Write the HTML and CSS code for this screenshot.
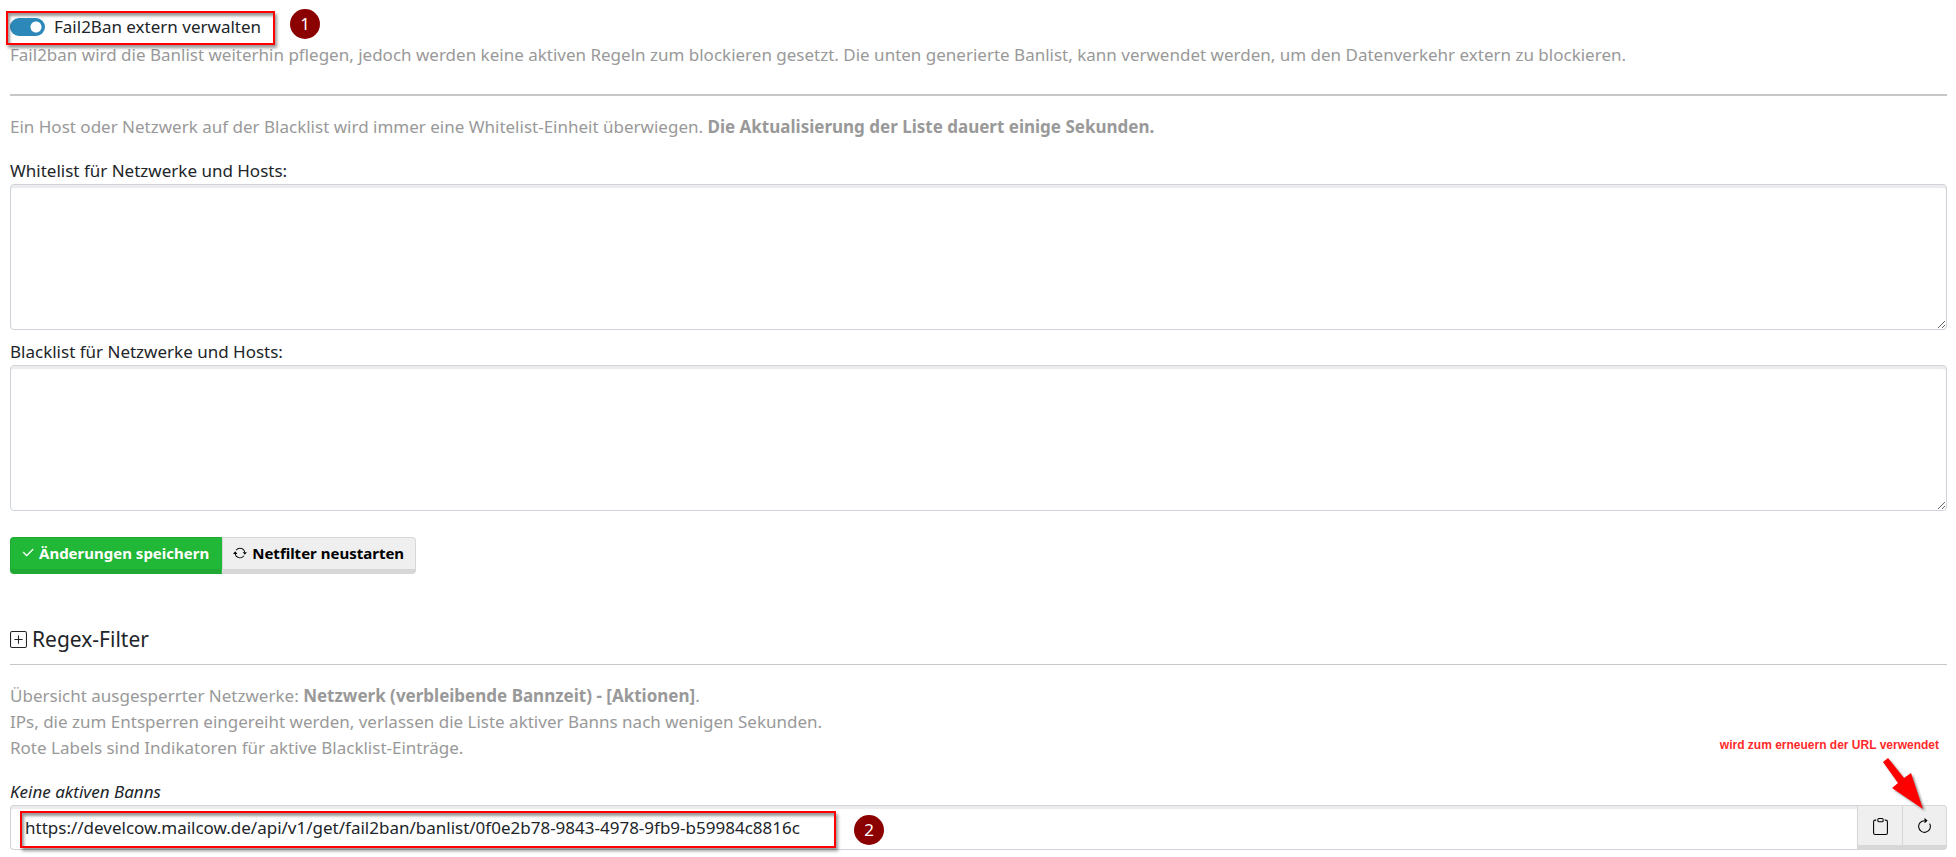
FILE: index.html
```html
<!DOCTYPE html>
<html lang="de">
<head>
<meta charset="utf-8">
<meta name="viewport" content="width=device-width, initial-scale=1">
<title>Fail2Ban</title>
<link rel="stylesheet" href="styles.css">
</head>
<body>
<main class="page">
  <form class="settings">
    <div class="switch-row">
      <input class="switch" type="checkbox" role="switch" id="manage-external" checked>
      <label for="manage-external">Fail2Ban extern verwalten</label>
      <span class="frame frame-switch"></span>
      <span class="badge badge-switch">1</span>
    </div>
    <p class="muted help">Fail2ban wird die Banlist weiterhin pflegen, jedoch werden keine aktiven Regeln zum blockieren gesetzt. Die unten generierte Banlist, kann verwendet werden, um den Datenverkehr extern zu blockieren.</p>
    <hr class="rule rule-thick">
    <p class="muted intro">Ein Host oder Netzwerk auf der Blacklist wird immer eine Whitelist-Einheit überwiegen. <b>Die Aktualisierung der Liste dauert einige Sekunden.</b></p>
    <div class="field">
      <label for="whitelist">Whitelist für Netzwerke und Hosts:</label>
      <textarea class="control area" id="whitelist" rows="5"></textarea>
    </div>
    <div class="field">
      <label for="blacklist">Blacklist für Netzwerke und Hosts:</label>
      <textarea class="control area" id="blacklist" rows="5"></textarea>
    </div>
    <div class="actions">
      <button class="btn btn-save" type="button">
        <svg class="icon" viewBox="0 0 16 16" fill="currentColor" aria-hidden="true"><path d="M13.854 3.646a.5.5 0 0 1 0 .708l-7 7a.5.5 0 0 1-.708 0l-3.5-3.5a.5.5 0 1 1 .708-.708L6.5 10.293l6.646-6.647a.5.5 0 0 1 .708 0z" stroke="currentColor" stroke-width=".8"/></svg>
        Änderungen speichern</button>
      <button class="btn btn-gray btn-restart" type="button">
        <svg class="icon" viewBox="0 0 16 16" fill="currentColor" aria-hidden="true"><path d="M11.534 7h3.932a.25.25 0 0 1 .192.41l-1.966 2.36a.25.25 0 0 1-.384 0l-1.966-2.36a.25.25 0 0 1 .192-.41zm-11 2h3.932a.25.25 0 0 0 .192-.41L2.692 6.23a.25.25 0 0 0-.384 0L.342 8.59A.25.25 0 0 0 .534 9z"/><path d="M8 3c-1.552 0-2.94.707-3.857 1.818a.5.5 0 1 1-.771-.636A6.002 6.002 0 0 1 13.917 7H12.9A5.002 5.002 0 0 0 8 3zM3.1 9a5.002 5.002 0 0 0 8.757 2.182.5.5 0 1 1 .771.636A6.002 6.002 0 0 1 2.083 9H3.1z"/></svg>
        Netfilter neustarten</button>
    </div>
  </form>

  <section class="bans">
    <h2 class="heading">
      <svg class="icon-plus" viewBox="0 0 16 16" fill="currentColor" aria-hidden="true"><path d="M14 1a1 1 0 0 1 1 1v12a1 1 0 0 1-1 1H2a1 1 0 0 1-1-1V2a1 1 0 0 1 1-1h12zM2 0a2 2 0 0 0-2 2v12a2 2 0 0 0 2 2h12a2 2 0 0 0 2-2V2a2 2 0 0 0-2-2H2z"/><path d="M8 4a.5.5 0 0 1 .5.5v3h3a.5.5 0 0 1 0 1h-3v3a.5.5 0 0 1-1 0v-3h-3a.5.5 0 0 1 0-1h3v-3A.5.5 0 0 1 8 4z"/></svg>
      Regex-Filter</h2>
    <hr class="rule">
    <p class="muted overview">Übersicht ausgesperrter Netzwerke: <b>Netzwerk (verbleibende Bannzeit) - [Aktionen]</b>.<br>IPs, die zum Entsperren eingereiht werden, verlassen die Liste aktiver Banns nach wenigen Sekunden.<br>Rote Labels sind Indikatoren für aktive Blacklist-Einträge.</p>
    <p class="no-bans"><i>Keine aktiven Banns</i></p>
    <div class="url-group">
      <input class="control url" type="text" aria-label="Banlist-URL" value="https://develcow.mailcow.de/api/v1/get/fail2ban/banlist/0f0e2b78-9843-4978-9fb9-b59984c8816c">
      <button class="btn btn-gray btn-square" type="button" aria-label="Kopieren">
        <svg class="icon-lg" viewBox="0 0 16 16" fill="currentColor" aria-hidden="true"><path d="M4 1.5H3a2 2 0 0 0-2 2V14a2 2 0 0 0 2 2h10a2 2 0 0 0 2-2V3.500a2 2 0 0 0-2-2h-1v1h1a1 1 0 0 1 1 1V14a1 1 0 0 1-1 1H3a1 1 0 0 1-1-1V3.500a1 1 0 0 1 1-1h1v-1z"/><path d="M9.500 1a.5.5 0 0 1 .5.5v1a.5.5 0 0 1-.5.5h-3a.5.5 0 0 1-.5-.5v-1a.5.5 0 0 1 .5-.5h3zm-3-1A1.500 1.500 0 0 0 5 1.500v1A1.500 1.500 0 0 0 6.500 4h3A1.500 1.500 0 0 0 11 2.500v-1A1.500 1.500 0 0 0 9.500 0h-3z"/></svg>
      </button>
      <button class="btn btn-gray btn-square btn-last" type="button" aria-label="Erneuern">
        <svg class="icon-lg" viewBox="0 0 16 16" fill="currentColor" aria-hidden="true"><path fill-rule="evenodd" d="M8 3a5 5 0 1 0 4.546 2.914.5.5 0 0 1 .908-.417A6 6 0 1 1 8 2v1z"/><path d="M8 4.466V.534a.25.25 0 0 1 .41-.192l2.360 1.966c.12.1.12.284 0 .384L8.410 4.658A.25.25 0 0 1 8 4.466z"/></svg>
      </button>
      <span class="frame frame-url"></span>
      <span class="badge badge-url">2</span>
      <span class="note">wird zum erneuern der URL verwendet</span>
      <svg class="arrow" viewBox="0 0 48 56" aria-hidden="true"><path d="M7 1 2 5 17 26 11 31 42 52 30 16 23 21Z" fill="red"/></svg>
    </div>
  </section>
</main>
</body>
</html>
```
FILE: styles.css
```css
* { box-sizing: border-box; }
body {
  margin: 0;
  background: #fff;
  color: #212529;
  font: 17px/26px "Noto Sans", "Open Sans", sans-serif;
}
p, h2, hr { margin: 0; }
.page { padding: 14px 9px 7px 10px; }
.muted { color: #999; }

.switch-row {
  position: relative;
  display: flex;
  align-items: center;
  gap: 9px;
}
.switch {
  appearance: none;
  width: 35px;
  height: 18px;
  margin: 0;
  border-radius: 9px;
  background: radial-gradient(circle at 26px 9px, #fff 5px, #2d88ba 6px);
}
.help { margin-top: 2px; }
.rule { border: 0; border-top: 1px solid #c7c7c7; }
.rule-thick { margin: 26px 0 18px; border-top-width: 2px; }
.intro { margin-bottom: 18px; }

.field { display: flex; flex-direction: column; margin-bottom: 9px; }
.control {
  margin: 0;
  border: 1px solid #ced4da;
  border-radius: 4px;
  background: #fff;
  box-shadow: inset 0 3px 1px #ececec;
  color: inherit;
  font: inherit;
}
.area {
  height: 146px;
  padding: 6px 14px;
  resize: vertical;
}

.actions { display: flex; margin-top: 26px; }
.btn {
  display: flex;
  align-items: center;
  justify-content: center;
  margin: 0;
  border: 1px solid;
  border-bottom-width: 5px;
  font: bold 15px/20px "Noto Sans", "Open Sans", sans-serif;
}
.btn-save {
  gap: 4px;
  padding: 5px 12px 6px 10px;
  border-color: #1fa832;
  border-right-color: #21b737;
  border-radius: 4px 0 0 4px;
  background: #21b737;
  color: #fff;
}
.btn-gray {
  border-color: #d7d7d7;
  background: #efefef;
  color: #000;
}
.btn-restart {
  gap: 5px;
  padding: 5px 11px 6px 10px;
  border-radius: 0 4px 4px 0;
}
.icon { width: 14px; height: 14px; }

.heading {
  display: flex;
  align-items: center;
  gap: 5px;
  margin-top: 52px;
  font-size: 21px;
  font-weight: 400;
}
.icon-plus { width: 17px; height: 17px; }
.bans .rule { margin: 12px 0 18px; }
.no-bans { margin-top: 18px; }

.url-group { position: relative; display: flex; }
.url {
  flex: 1;
  min-width: 0;
  height: 45px;
  padding: 0 14px;
  border-right: 0;
  border-radius: 4px 0 0 4px;
}
.btn-square { width: 45px; padding: 2px 0 0; border-right: 0; }
.btn-last { border-right: 1px solid #d7d7d7; border-radius: 0 4px 4px 0; }
.icon-lg { width: 17px; height: 17px; }

/* Annotations lying over the form */
.frame {
  position: absolute;
  border: 2px solid #f00;
  box-shadow: 2px 3px 3px rgba(0, 0, 0, .4), inset 2px 3px 3px rgba(0, 0, 0, .4);
  pointer-events: none;
}
.frame-switch { left: -4px; top: -3px; width: 269px; height: 34px; }
.frame-url { left: 10px; top: 6px; width: 816px; height: 37px; }
.badge {
  position: absolute;
  width: 30px;
  height: 30px;
  border-radius: 50%;
  background: #8b0000;
  color: #fff;
  font-size: 17px;
  line-height: 29px;
  text-align: center;
}
.badge-switch { left: 280px; top: -5px; }
.badge-url { left: 844px; top: 10px; }
.note {
  position: absolute;
  right: 8px;
  bottom: 97px;
  color: #ff2a2a;
  font: bold 12px/16px "Liberation Sans", Arial, sans-serif;
  white-space: nowrap;
}
.arrow {
  position: absolute;
  right: 18px;
  bottom: 37px;
  width: 48px;
  height: 56px;
  filter: drop-shadow(2px 2px 1px rgba(0, 0, 0, .4));
  pointer-events: none;
}
```
